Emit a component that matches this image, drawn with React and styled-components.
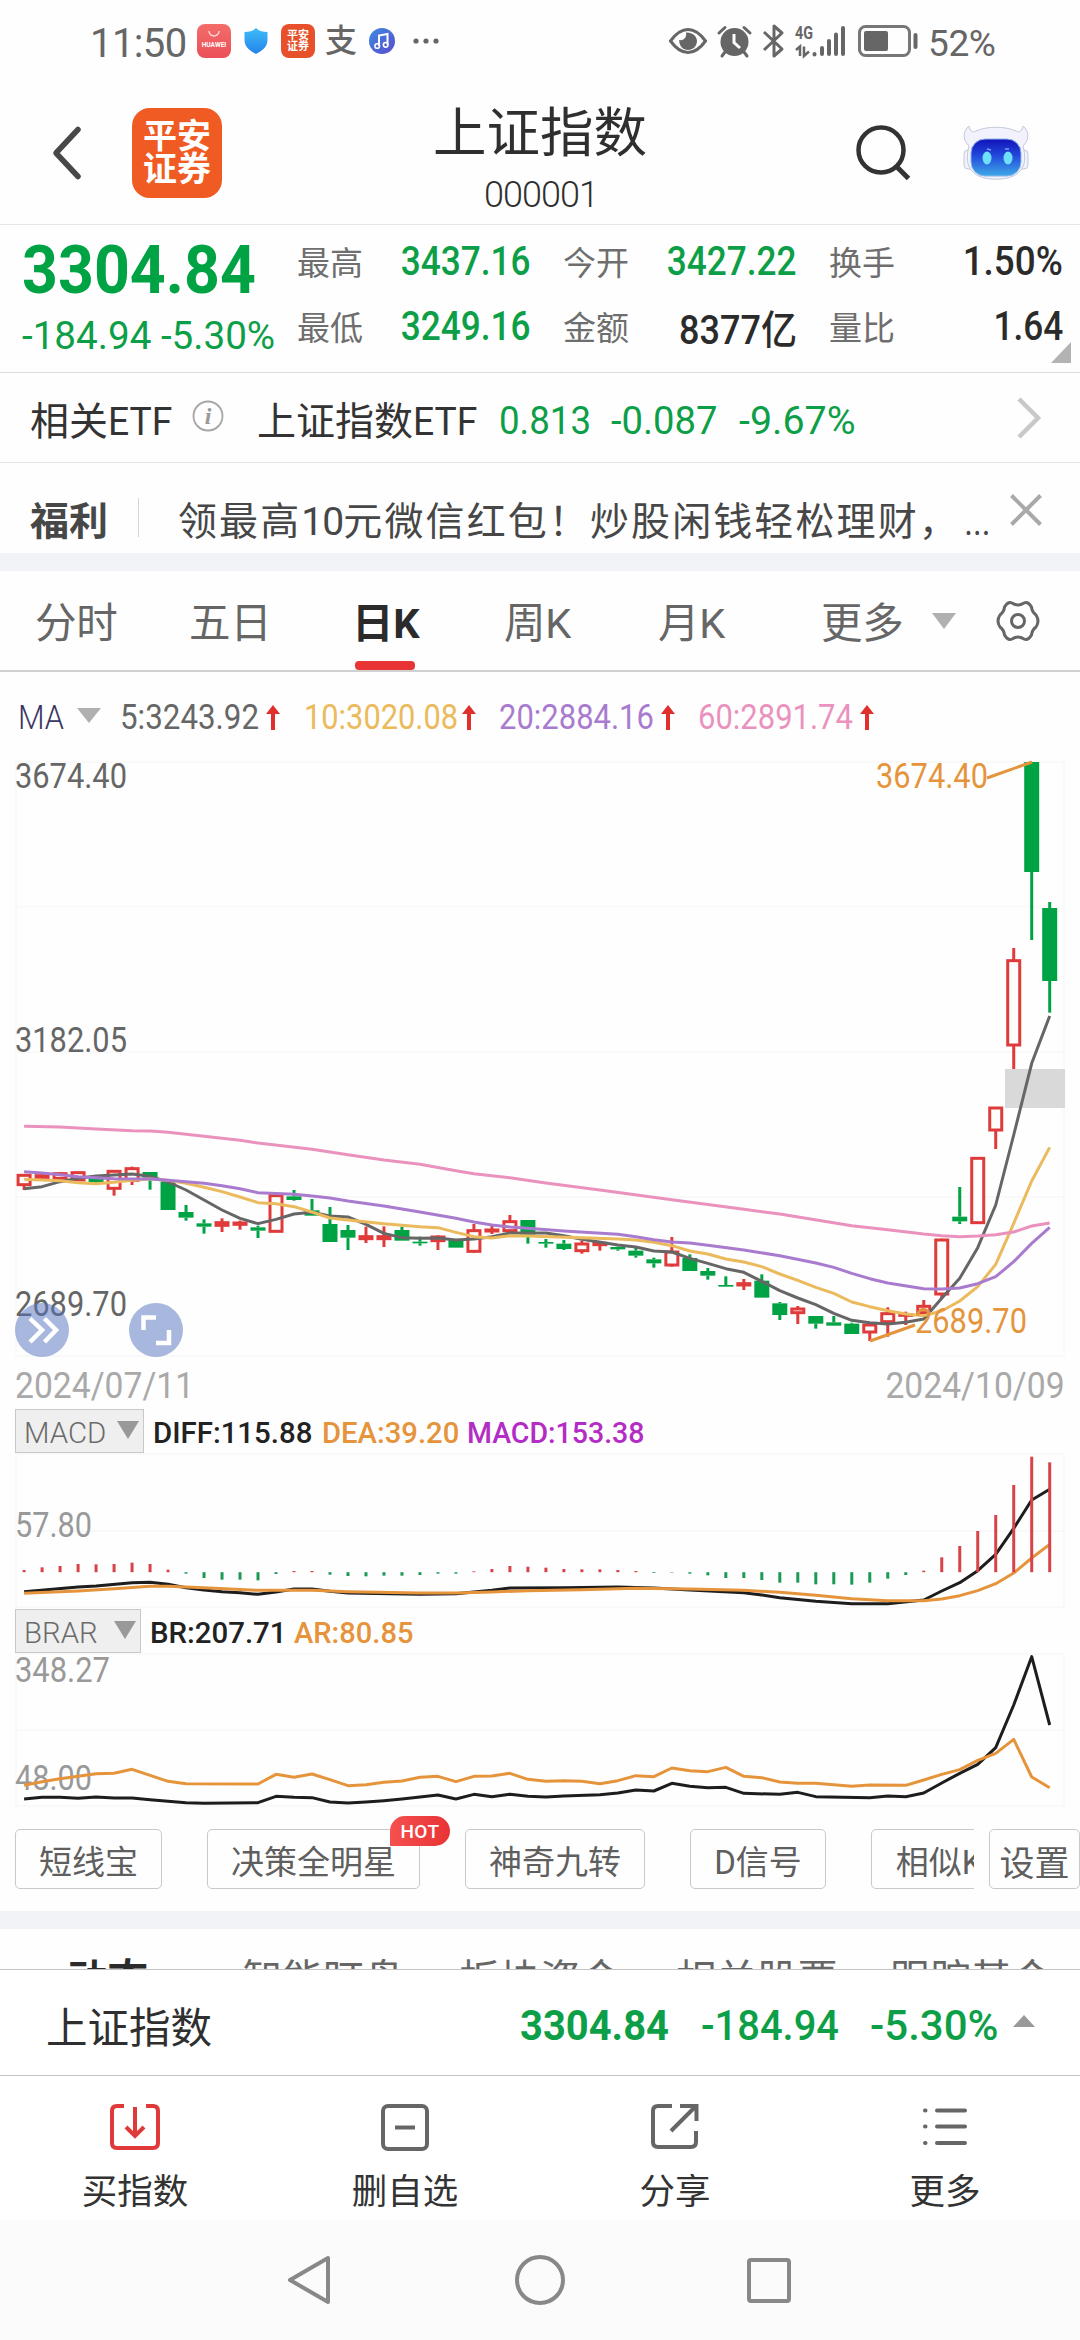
import React from "react";
import styled, { createGlobalStyle } from "styled-components";

const GREEN = "#0d9f48";
const RED = "#df3b3b";
const ORANGE = "#e5943c";

const GlobalStyle = createGlobalStyle`
  * {
    box-sizing: border-box;
  }
  body {
    margin: 0;
    background: #fefefe;
    font-family: Roboto, "Noto Sans CJK SC", sans-serif;
    color: #333;
  }
`;

const Page = styled.div`
  width: 1080px;
  height: 2340px;
  overflow: hidden;
  display: flex;
  flex-direction: column;
  background: #fefefe;

  & > * {
    flex-shrink: 0;
  }
`;

const Svg = styled.svg`
  display: block;
  flex: none;
  overflow: visible;
  margin-left: ${(p) => p.$ml || 0}px;
  margin-top: ${(p) => p.$mt || 0}px;
`;

// 숫자용 좁은 글꼴
const Num = styled.span`
  display: inline-block;
  flex: none;
  white-space: nowrap;
  font-size: ${(p) => p.$size || 39}px;
  font-weight: ${(p) => p.$weight || 400};
  color: ${(p) => p.$color || "inherit"};
  transform: scaleX(${(p) => p.$sx || 0.9});
  transform-origin: ${(p) => p.$origin || "left"} center;
`;

/* ---------- status bar ---------- */
const StatusBar = styled.div`
  height: 80px;
  padding-top: 2px;
  display: flex;
  align-items: center;
  color: #666;
`;
const Time = styled.div`
  width: 107px;
  margin-left: 90px;
  padding-top: 4px;
  font-size: 40px;
  letter-spacing: -0.6px;
`;
const AppIcon = styled.div`
  width: 34px;
  height: 34px;
  margin-right: 8px;
  border-radius: 8px;
  flex: none;
  display: grid;
  place-items: center;
  overflow: hidden;
  background: ${(p) => p.$bg};
`;
const LogoText = styled.div`
  color: #fff;
  font-weight: 700;
  font-size: ${(p) => p.$size}px;
  line-height: ${(p) => p.$line}px;
  white-space: nowrap;
  text-align: center;
`;
const Alipay = styled.div`
  width: 32px;
  margin-left: 2px;
  font-size: 32px;
  line-height: 30px;
  font-weight: 500;
`;
const StatusRight = styled.div`
  width: 411px;
  margin-left: auto;
  display: flex;
  align-items: center;
`;
const Battery = styled.div`
  margin-left: 10px;
  padding-top: 5px;
  font-size: 37px;
  letter-spacing: -0.4px;
`;

/* ---------- header ---------- */
const Header = styled.div`
  height: 145px;
  display: grid;
  grid-template-columns: 1fr auto 1fr;
  align-items: center;
  border-bottom: 1px solid #e6e6e6;
`;
const HeaderSide = styled.div`
  display: flex;
  align-items: center;
  justify-content: ${(p) => (p.$right ? "flex-end" : "flex-start")};
  padding: 2px 51px 0 52px;
`;
const BrandLogo = styled.div`
  width: 90px;
  height: 90px;
  margin-left: 51px;
  border-radius: 18px;
  background: #f05a23;
  display: grid;
  place-items: center;
`;
const TitleBox = styled.div`
  margin-top: 8px;
  text-align: center;
  color: #2f2f2f;
`;
const Title = styled.div`
  height: 76px;
  line-height: 83px;
  font-size: 53.5px;
`;
const Code = styled.div`
  height: 52px;
  line-height: 55px;
  font-size: 36px;
  letter-spacing: -1px;
  text-indent: 2px;
  font-weight: 300;
`;

/* ---------- quote ---------- */
const Quote = styled.div`
  height: 148px;
  display: grid;
  grid-template-columns: 275px 234px 266px 266px;
  padding-left: 22px;
  border-bottom: 1px solid #dedede;
  position: relative;
`;
const PriceBox = styled.div`
  padding-top: 5px;
`;
const Price = styled.div`
  height: 80px;
  line-height: 80px;
  color: #00a344;
`;
const Change = styled.div`
  height: 52px;
  line-height: 52px;
`;
const StatCol = styled.div`
  display: flex;
  flex-direction: column;
  padding: 4px 0 0 ${(p) => p.$pl || 0}px;
`;
const Stat = styled.div`
  height: 65px;
  display: flex;
  align-items: center;
  justify-content: space-between;
  font-size: 33px;
  color: #6e6e6e;
`;
const StatLabel = styled.span`
  margin-top: -2px;
`;
const Corner = styled.div`
  position: absolute;
  right: 9px;
  bottom: 9px;
  width: 0;
  height: 0;
  border-left: 20px solid transparent;
  border-bottom: 21px solid #b3b3b3;
`;

/* ---------- etf / welfare ---------- */
const EtfRow = styled.div`
  height: 90px;
  display: flex;
  align-items: center;
  padding-left: 30px;
  border-bottom: 1px solid #e2e2e2;
  font-size: 39px;
`;
const Slot = styled.div`
  width: ${(p) => p.$w}px;
  margin-left: ${(p) => p.$ml || 0}px;
  padding-top: ${(p) => p.$pt || 0}px;
  flex: none;
  display: flex;
  align-items: baseline;
  white-space: nowrap;
`;
const WelfareRow = styled.div`
  height: 90px;
  display: flex;
  align-items: center;
  padding: 19px 0 0 30px;
  font-size: 39px;
  color: #474747;
`;
const WelfareTag = styled.div`
  width: 108px;
  font-weight: 700;
`;
const WelfareText = styled.div`
  width: 815px;
  margin-left: 39px;
  display: flex;
  align-items: baseline;
  white-space: nowrap;
  letter-spacing: 2.1px;
`;
const Vline = styled.div`
  width: 1px;
  height: 39px;
  background: #d5d5d5;
`;
const Digits = styled.span`
  letter-spacing: -0.9px;
`;
const Dots = styled.span`
  margin-left: auto;
  letter-spacing: 0;
  transform: scaleX(0.85);
`;
const Band = styled.div`
  height: 18px;
  background: #f2f3f6;
`;

/* ---------- period tabs ---------- */
const Tabs = styled.div`
  height: 101px;
  display: grid;
  grid-template-columns: 154px 163px 152px 154px 163px 109px 1fr;
  padding-left: 35px;
  border-bottom: 2px solid #d0d0d0;
`;
const Tab = styled.div`
  height: 99px;
  display: flex;
  align-items: center;
  padding-bottom: 2px;
  font-size: 41.5px;
  letter-spacing: -0.3px;
  color: ${(p) => (p.$active ? "#2b2b2b" : "#666")};
  font-weight: ${(p) => (p.$active ? 700 : 400)};
  position: relative;

  &::after {
    content: "";
    display: ${(p) => (p.$active ? "block" : "none")};
    position: absolute;
    left: 3px;
    bottom: 0;
    width: 60px;
    height: 9px;
    border-radius: 4px;
    background: #e83434;
  }
`;
const TabTools = styled.div`
  display: flex;
  align-items: center;
`;

/* ---------- MA row ---------- */
const MaRow = styled.div`
  height: 78px;
  display: grid;
  grid-template-columns: 102px 184px 195px 199px 1fr;
  align-items: center;
  padding: 12px 0 0 18px;
`;
const MaItem = styled.div`
  width: ${(p) => p.$w}px;
  display: flex;
  align-items: center;
  justify-content: space-between;
  color: ${(p) => p.$color};

  ${Num} {
    width: 0;
  }
`;

/* ---------- charts ---------- */
const DateRow = styled.div`
  height: 44px;
  padding: 0 15px 2px 15px;
  display: flex;
  align-items: center;
  justify-content: space-between;
  color: #a9a9a9;
`;
const IndicatorHead = styled.div`
  height: 44px;
  padding-left: 15px;
  display: flex;
  align-items: center;
`;
const Chip = styled.div`
  width: ${(p) => p.$w}px;
  height: 44px;
  margin-right: 9px;
  padding: 2px 4px 0 8px;
  display: flex;
  justify-content: space-between;
  align-items: center;
  border: 1px solid #c8c8c8;
  background: #efefef;
  color: #6b6b6b;
`;

/* ---------- tools ---------- */
const ToolRow = styled.div`
  height: 101px;
  padding-left: 15px;
  display: flex;
`;
const ToolList = styled.div`
  width: 960px;
  height: 101px;
  margin-right: 15px;
  padding-top: 19px;
  display: flex;
  gap: 45px;
  overflow: hidden;
`;
const ToolButton = styled.div`
  width: ${(p) => p.$w}px;
  height: 60px;
  margin-top: ${(p) => p.$mt || 0}px;
  flex: none;
  display: flex;
  align-items: center;
  justify-content: center;
  padding-top: 2px;
  border: 1px solid #c9c9c9;
  border-radius: 5px;
  font-size: ${(p) => p.$size || 33}px;
  color: #5f5f5f;
  white-space: nowrap;
  position: relative;
`;
const Hot = styled.span`
  position: absolute;
  left: 182px;
  top: -14px;
  width: 60px;
  height: 30px;
  line-height: 31px;
  text-align: center;
  border-radius: 15px 15px 15px 0;
  background: linear-gradient(90deg, #f5504f, #e93335);
  color: #fff;
  font-size: 19px;
  font-weight: 500;
  letter-spacing: 0.5px;
`;

/* ---------- lower ---------- */
const NewsTabs = styled.div`
  height: 40px;
  overflow: hidden;
  display: grid;
  grid-template-columns: 175px 217px 217px 214px 1fr;
  padding-left: 67px;
  line-height: 103px;
  font-size: 40.5px;
  color: #666;
  white-space: nowrap;

  b {
    color: #2b2b2b;
  }
`;
const SummaryBar = styled.div`
  height: 106px;
  padding-left: 46px;
  display: flex;
  align-items: center;
  padding-top: 5px;
  border-top: 1px solid #c4c4c4;
  font-size: 41.5px;
  color: #2f2f2f;
  background: #fff;
`;
const Actions = styled.div`
  height: 145px;
  display: grid;
  grid-template-columns: repeat(4, 270px);
  border-top: 1px solid #c4c4c4;
  background: #fff;
`;
const Action = styled.div`
  display: flex;
  flex-direction: column;
  align-items: center;
  padding-top: 28px;
  font-size: 35.5px;
  line-height: 44px;
  gap: 18px;
`;
const NavBar = styled.div`
  height: 120px;
  display: flex;
  align-items: center;
  background: #fbfbfb;
`;

const stats = [
  [
    ["最高", "3437.16", GREEN, 0.88],
    ["最低", "3249.16", GREEN, 0.88],
  ],
  [
    ["今开", "3427.22", GREEN, 0.88],
    ["金额", "8377亿", "#2b2b2b", 0.9],
  ],
  [
    ["换手", "1.50%", "#2b2b2b", 0.92],
    ["量比", "1.64", "#2b2b2b", 0.88],
  ],
];

// [up, bodyTop, bodyBottom, high, low]
const candles = [
  [1, 286, 314, 286, 330],
  [1, 287, 294, 282, 298],
  [1, 281, 295, 277, 298],
  [1, 278, 300, 275, 302],
  [0, 292, 307, 290, 311],
  [1, 274, 325, 270, 347],
  [1, 266, 301, 260, 315],
  [0, 276, 293, 276, 329],
  [0, 306, 390, 306, 390],
  [0, 396, 413, 375, 422],
  [0, 430, 440, 418, 461],
  [1, 428, 436, 415, 456],
  [1, 429, 433, 422, 449],
  [0, 442, 452, 437, 474],
  [1, 347, 454, 347, 454],
  [0, 349, 360, 330, 362],
  [0, 391, 407, 357, 407],
  [0, 432, 486, 381, 486],
  [0, 450, 473, 435, 510],
  [1, 470, 476, 440, 489],
  [1, 470, 476, 439, 501],
  [0, 450, 482, 440, 482],
  [0, 485, 490, 470, 497],
  [1, 471, 482, 466, 510],
  [0, 478, 503, 478, 503],
  [1, 452, 514, 432, 518],
  [1, 450, 453, 435, 462],
  [1, 425, 452, 405, 452],
  [0, 420, 464, 420, 491],
  [0, 486, 491, 477, 503],
  [0, 491, 507, 480, 510],
  [1, 492, 512, 482, 521],
  [1, 490, 494, 487, 512],
  [0, 501, 508, 500, 512],
  [0, 512, 527, 500, 533],
  [0, 538, 550, 533, 563],
  [1, 516, 555, 471, 560],
  [0, 534, 573, 523, 573],
  [0, 573, 587, 564, 599],
  [0, 615, 620, 589, 620],
  [1, 611, 615, 597, 630],
  [0, 602, 653, 583, 653],
  [0, 670, 705, 666, 720],
  [1, 687, 698, 678, 732],
  [0, 708, 731, 708, 746],
  [0, 727, 737, 708, 737],
  [0, 731, 762, 728, 762],
  [1, 735, 756, 735, 783],
  [1, 701, 725, 682, 770],
  [1, 704, 706, 695, 735],
  [1, 679, 698, 660, 698],
  [1, 480, 642, 476, 656],
  [0, 410, 424, 321, 432],
  [1, 235, 428, 235, 432],
  [1, 84, 150, 84, 207],
  [1, -358, -105, -396, -33],
  [0, -954, -624, -954, -420],
  [0, -516, -297, -534, -202],
];

const ma60 = [[0,139],[2,141],[4,147],[6,152],[7,153],[8,157],[10,169],[12,181],[13,189],[16,208],[18,224],[20,240],[22,253],[24,272],[25,281],[27,293],[29,309],[32,330],[36,359],[40,388],[42,402],[46,437],[48,449],[50,462],[51,467],[52,470],[53,468],[54,464],[55,456],[56,438],[57,429]];
const ma20 = [[0,275],[1,279],[2,284],[3,290],[5,296],[7,297],[8,301],[10,310],[11,317],[12,326],[13,338],[15,343],[16,348],[17,354],[18,363],[20,378],[22,396],[24,415],[25,426],[26,435],[27,441],[28,445],[30,453],[33,463],[34,470],[35,479],[36,486],[37,489],[38,496],[40,510],[42,527],[44,549],[45,562],[46,580],[47,596],[48,609],[50,626],[51,627],[52,624],[53,611],[54,590],[55,545],[56,490],[57,442]];
const ma10 = [[0,298],[2,302],[3,308],[4,311],[5,307],[6,301],[7,297],[8,301],[9,310],[10,322],[11,335],[12,351],[13,368],[14,371],[15,380],[16,396],[17,414],[18,420],[20,431],[22,440],[23,443],[24,457],[25,470],[26,474],[27,467],[28,468],[31,473],[33,477],[34,480],[35,487],[36,497],[37,513],[38,522],[39,537],[40,546],[41,560],[42,582],[43,601],[44,622],[45,640],[46,666],[47,680],[48,692],[49,702],[50,707],[51,693],[52,663],[53,620],[54,553],[55,430],[56,303],[57,202]];
const ma5 = [[0,326],[1,320],[2,305],[3,295],[4,288],[5,285],[6,282],[7,289],[8,306],[9,330],[10,360],[11,390],[12,415],[13,431],[14,418],[15,402],[16,397],[17,408],[18,411],[19,433],[20,460],[21,473],[22,475],[23,474],[24,480],[25,477],[26,470],[27,459],[29,459],[30,467],[31,478],[33,495],[34,501],[35,513],[36,516],[37,535],[38,550],[39,566],[40,577],[41,604],[42,632],[43,654],[44,674],[45,700],[46,721],[47,728],[48,732],[49,727],[50,717],[51,655],[52,595],[53,503],[54,375],[55,165],[56,-50],[57,-192]];

const macdBars = [510,502,498,492,493,492,488,492,509,521,534,539,539,541,522,513,513,524,528,529,527,527,525,521,521,514,507,498,500,503,507,508,508,510,513,519,518,521,526,534,534,540,548,548,553,553,554,548,536,525,512,472,438,393,345,255,170,187];
const diff = [[0,575],[3,561],[4,558],[6,548],[7,547],[8,553],[9,563],[10,570],[11,575],[12,578],[13,583],[14,576],[15,567],[16,567],[17,574],[18,579],[22,583],[24,581],[26,571],[27,564],[30,563],[33,561],[35,564],[37,570],[40,578],[41,585],[42,593],[44,604],[46,611],[48,611],[50,600],[51,573],[52,548],[53,512],[54,463],[55,385],[56,300],[57,268]];
const dea = [[0,580],[3,573],[5,566],[7,559],[8,559],[10,563],[13,571],[16,571],[18,575],[22,579],[24,579],[26,576],[28,572],[31,569],[34,565],[37,567],[40,571],[42,577],[44,586],[46,596],[48,602],[50,602],[51,597],[52,587],[53,572],[54,551],[55,519],[56,474],[57,433]];
const br = [[0,1197],[1,1192],[2,1192],[3,1195],[4,1191],[5,1194],[6,1194],[7,1199],[8,1204],[9,1208],[10,1210],[13,1208],[14,1189],[15,1192],[16,1193],[17,1206],[18,1209],[19,1206],[20,1202],[21,1197],[22,1191],[23,1185],[24,1197],[25,1183],[26,1190],[27,1183],[28,1189],[29,1191],[30,1188],[32,1184],[33,1179],[34,1170],[35,1173],[36,1150],[37,1159],[38,1163],[39,1162],[40,1180],[42,1183],[43,1177],[44,1190],[47,1193],[48,1188],[49,1190],[50,1179],[51,1149],[52,1120],[53,1093],[54,1043],[55,915],[56,770],[57,975]];
const ar = [[0,1156],[1,1145],[2,1136],[3,1129],[4,1121],[5,1120],[6,1108],[7,1126],[8,1144],[9,1151],[13,1152],[14,1123],[15,1132],[16,1122],[17,1139],[18,1157],[19,1154],[20,1147],[21,1143],[22,1132],[23,1129],[24,1145],[25,1129],[26,1128],[27,1120],[28,1138],[29,1144],[30,1142],[31,1144],[32,1151],[33,1142],[34,1127],[35,1130],[36,1104],[37,1112],[38,1115],[39,1102],[40,1129],[41,1133],[42,1146],[43,1150],[44,1150],[46,1159],[47,1155],[49,1156],[50,1140],[51,1123],[52,1109],[53,1081],[54,1060],[55,1018],[56,1131],[57,1163]];

const xAt = (i) => 24.1 + i * 17.993;

function Line({ data, base, color, width = 3 }) {
  return (
    <polyline
      points={data.map(([i, v]) => `${xAt(i)},${base + v / 3}`).join(" ")}
      fill="none"
      stroke={color}
      strokeWidth={width}
      strokeLinejoin="round"
    />
  );
}

function Grid({ rows, color = "#f9f9f9" }) {
  const top = rows[0];
  const bottom = rows[rows.length - 1];
  return (
    <g stroke={color} strokeWidth="2">
      {rows.map((y) => (
        <line key={y} x1="15" x2="1065" y1={y} y2={y} />
      ))}
      <line x1="16" x2="16" y1={top} y2={bottom} />
      <line x1="1064" x2="1064" y1={top} y2={bottom} />
    </g>
  );
}

function AxisText({ x, y, w, color = "#666", children }) {
  return (
    <text
      x={x}
      y={y}
      fontSize="35"
      fill={color}
      textLength={w}
      lengthAdjust="spacingAndGlyphs"
    >
      {children}
    </text>
  );
}

function PriceChart() {
  const y = (v) => 330 + v / 3;
  return (
    <Svg width="1080" height="615" viewBox="0 0 1080 615">
      <Grid rows={[12, 156.5, 302, 447, 606]} />
      <rect x="1005" y="319" width="60" height="39" fill="#d9d9d9" />
      <AxisText x={15} y={38} w={112}>3674.40</AxisText>
      <AxisText x={15} y={302} w={112}>3182.05</AxisText>
      <AxisText x={15} y={566} w={112}>2689.70</AxisText>
      {candles.map(([up, top, bottom, high, low], i) => {
        const x = xAt(i);
        const color = up ? RED : "#00a344";
        return (
          <g key={i} stroke={color} strokeWidth="3">
            <line x1={x} x2={x} y1={y(high)} y2={y(top)} />
            <line x1={x} x2={x} y1={y(bottom)} y2={y(low)} />
            {up ? (
              <rect x={x - 6} y={y(top)} width="12" height={y(bottom) - y(top)} fill="#fefefe" />
            ) : (
              <rect x={x - 7.5} y={y(top)} width="15" height={y(bottom) - y(top)} fill={color} stroke="none" />
            )}
          </g>
        );
      })}
      <Line data={ma5} base={330} color="#666" />
      <Line data={ma10} base={330} color="#ebba5c" />
      <Line data={ma20} base={330} color="#a97bcf" />
      <Line data={ma60} base={330} color="#ea92bd" />
      <g stroke={ORANGE} strokeWidth="3">
        <line x1="987" y1="28" x2="1032" y2="12" />
        <line x1="870" y1="591" x2="915" y2="575" />
      </g>
      <AxisText x={876} y={38} w={112} color={ORANGE}>3674.40</AxisText>
      <AxisText x={915} y={583} w={112} color={ORANGE}>2689.70</AxisText>
      <circle cx="42" cy="580" r="27" fill="rgba(82,112,190,0.5)" />
      <circle cx="156" cy="580" r="27" fill="rgba(82,112,190,0.5)" />
      <g fill="none" stroke="#fff" strokeWidth="4.5">
        <path d="M30 568.5 L42 580 L30 592" />
        <path d="M44.500 568.500 L56 580 L44.500 592" />
        <path d="M156 567.500 H143.500 V580" />
        <path d="M156 593 H169 V580" />
      </g>
    </Svg>
  );
}

function MacdChart() {
  return (
    <Svg width="1080" height="156" viewBox="0 0 1080 156">
      <Grid rows={[1, 78, 154]} />
      <AxisText x={15} y={84} w={77} color="#999">57.80</AxisText>
      <Line data={diff} base={-53} color="#1d1d1d" />
      <Line data={dea} base={-53} color={ORANGE} />
      {macdBars.map((v, i) => {
        const up = v < 516;
        return (
          <line
            key={i}
            x1={xAt(i)}
            x2={xAt(i)}
            y1={119.2}
            y2={-53 + v / 3}
            stroke={up ? "#d8434a" : "#1b9a56"}
            strokeWidth="3"
          />
        );
      })}
    </Svg>
  );
}

function BrarChart() {
  return (
    <Svg width="1080" height="157" viewBox="0 0 1080 157">
      <Grid rows={[1, 77, 153]} />
      <AxisText x={15} y={29} w={95} color="#999">348.27</AxisText>
      <AxisText x={15} y={137} w={77} color="#999">48.00</AxisText>
      <Line data={br} base={-253} color="#1d1d1d" />
      <Line data={ar} base={-253} color={ORANGE} />
    </Svg>
  );
}

function DownTriangle({ w = 24, h = 15, color = "#b0b0b0", ml, mt }) {
  return (
    <Svg width={w} height={h} $ml={ml} $mt={mt}>
      <path d={`M0 0 H${w} L${w / 2} ${h} Z`} fill={color} />
    </Svg>
  );
}

function UpArrow() {
  return (
    <Svg width="14" height="25" viewBox="0 0 14 25">
      <path d="M7 0 L14 9 H9 V25 H5 V9 H0 Z" fill="#e0302c" />
    </Svg>
  );
}

function Status() {
  return (
    <StatusBar>
      <Time>11:50</Time>
      <AppIcon $bg="linear-gradient(#f36d6a, #ea5058)">
        <Svg width="34" height="34" viewBox="0 0 34 34">
          <path d="M12 7 C12 13.500 22 13.500 22 7" fill="none" stroke="#fbd5d3" strokeWidth="1.500" />
          <text x="17" y="22.500" fontSize="6.600" fontWeight="700" fill="#fff" textAnchor="middle">HUAWEI</text>
        </Svg>
      </AppIcon>
      <AppIcon $bg="#fff">
        <Svg width="24" height="26" viewBox="0 0 24 26">
          <defs>
            <linearGradient id="shield" x1="0" y1="0" x2="0" y2="1">
              <stop offset="0" stopColor="#3fbcf8" />
              <stop offset="1" stopColor="#2483ec" />
            </linearGradient>
          </defs>
          <path d="M12 0 C15 3 19 4 23.500 4 V12 C23.500 19 18 23 12 26 C6 23 .5 19 .5 12 V4 C5 4 9 3 12 0Z" fill="url(#shield)" />
        </Svg>
      </AppIcon>
      <AppIcon $bg="#e6502a">
        <LogoText $size={11} $line={11}>
          平安
          <br />
          证券
        </LogoText>
      </AppIcon>
      <Alipay>支</Alipay>
      <Svg width="26" height="26" viewBox="0 0 26 26" $ml={12}>
        <defs>
          <linearGradient id="music" x1="0" y1="0" x2="1" y2="1">
            <stop offset="0" stopColor="#3c8be0" />
            <stop offset="1" stopColor="#5a4ccf" />
          </linearGradient>
        </defs>
        <circle cx="13" cy="13" r="13" fill="url(#music)" />
        <path d="M10 18 V7.500 L18.500 6 V16.500" fill="none" stroke="#fff" strokeWidth="2" />
        <circle cx="8.200" cy="18" r="2.300" fill="none" stroke="#fff" strokeWidth="1.600" />
        <circle cx="16.700" cy="16.800" r="2.300" fill="none" stroke="#fff" strokeWidth="1.600" />
      </Svg>
      <Svg width="26" height="6" $ml={18} viewBox="0 0 26 6" fill="#666">
        <circle cx="3" cy="3" r="2.600" />
        <circle cx="13" cy="3" r="2.600" />
        <circle cx="23" cy="3" r="2.600" />
      </Svg>
      <StatusRight>
        <Svg width="38" height="26" viewBox="0 0 38 26">
          <path d="M1.500 13 C8 4 14 1.500 19 1.500 S30 4 36.500 13 C30 22 24 24.500 19 24.500 S8 22 1.500 13Z" fill="none" stroke="#666" strokeWidth="3" />
          <path d="M17 4.500 C18 9 15 13 10.200 12 C10 18 14 22 19 22 C24 22 28 18 28 13 C28 8 23 4 17 4.500Z" fill="#666" />
        </Svg>
        <Svg width="33" height="31" viewBox="0 0 33 31" $ml={11}>
          <circle cx="16.500" cy="16" r="14" fill="#666" />
          <path d="M1 7 L7 1.500 M32 7 L26 1.500 M7 26 L4 30 M26 26 L29 30" stroke="#666" strokeWidth="3" strokeLinecap="round" />
          <path d="M16 8 V16.500 L22 22" fill="none" stroke="#fff" strokeWidth="3" />
        </Svg>
        <Svg width="21" height="34" viewBox="0 0 21 34" $ml={12}>
          <path d="M1 8 L19 25 L11 32 V2 L19 9 L1 26" fill="none" stroke="#666" strokeWidth="3" strokeLinejoin="round" />
        </Svg>
        <Svg width="50" height="32" viewBox="0 0 50 32" $ml={11}>
          <text x="0" y="14" fontSize="18" fontWeight="700" fill="#666" textLength="18" lengthAdjust="spacingAndGlyphs">4G</text>
          <g stroke="#666" strokeWidth="2.500" fill="none">
            <path d="M1 25 L5 21.500 V31 M9 21.500 V31 L14 26.500" />
          </g>
          <g stroke="#666" strokeWidth="4" strokeLinecap="round">
            <path d="M19.500 29 V29.500 M27 23 V29 M34 16 V29 M41 9.500 V29 M48 3 V29" />
          </g>
        </Svg>
        <Svg width="60" height="32" viewBox="0 0 60 32" $ml={13}>
          <rect x="1.500" y="1.500" width="50" height="29" rx="6" fill="none" stroke="#777" strokeWidth="3" />
          <rect x="6" y="6" width="24" height="20" rx="2" fill="#666" />
          <rect x="55.500" y="8" width="4" height="16" rx="2" fill="#666" />
        </Svg>
        <Battery>52%</Battery>
      </StatusRight>
    </StatusBar>
  );
}

function Robot() {
  return (
    <Svg width="66" height="56" viewBox="0 0 66 56" $ml={53}>
      <defs>
        <linearGradient id="face" x1="0" y1="0" x2="0" y2="1">
          <stop offset="0" stopColor="#1212b8" />
          <stop offset="0.450" stopColor="#2249dc" />
          <stop offset="1" stopColor="#3fa9e6" />
        </linearGradient>
      </defs>
      <g fill="#f1f2fb" stroke="#c3c8dc" strokeWidth="1">
        <rect x="1" y="25" width="10" height="19" rx="4" />
        <rect x="55" y="25" width="10" height="19" rx="4" />
        <path d="M6 1 C7 6 9 8 13 6 C24 1 42 1 53 6 C57 8 59 6 60 1 C66 6 67 14 60 21 C63 32 62 41 57 46 C49 57 17 57 9 46 C4 41 3 32 6 21 C-1 14 0 6 6 1Z" />
      </g>
      <rect x="8" y="14" width="50" height="37" rx="14" fill="url(#face)" stroke="#8fb4ee" strokeWidth="1" />
      <ellipse cx="24" cy="33" rx="4.500" ry="6.500" fill="#6fe0fb" />
      <ellipse cx="45" cy="33" rx="4.500" ry="6.500" fill="#6fe0fb" />
      <path d="M24 24 L28 25 M42 24 L46 24" stroke="#7d9bf5" strokeWidth="1.500" />
    </Svg>
  );
}

const actions = [
  {
    label: "买指数",
    icon: (
      <g stroke="#e0393a">
        <path d="M15 2 H8 Q3 2 3 7 V39 Q3 44 8 44 H44 Q49 44 49 39 V7 Q49 2 44 2 H37" />
        <path d="M26 3 V32 M17 23 L26 32 L35 23" />
      </g>
    ),
  },
  {
    label: "删自选",
    icon: (
      <g stroke="#666">
        <rect x="4" y="2" width="44" height="43" rx="5" />
        <path d="M16 23.500 H36" />
      </g>
    ),
  },
  {
    label: "分享",
    icon: (
      <g stroke="#666">
        <path d="M23 2 H9 Q4 2 4 7 V38 Q4 43 9 43 H42 Q47 43 47 38 V27" />
        <path d="M31 2 H47.500 V17 M46 3 L22 27" />
      </g>
    ),
  },
  {
    label: "更多",
    icon: (
      <g stroke="#666" strokeLinecap="round">
        <path d="M18 6.500 H46 M18 22.500 H46 M18 39 H46 M6 6.500 H6.500 M6 22.500 H6.500 M6 39 H6.500" />
      </g>
    ),
  },
];

export default function App() {
  return (
    <>
      <GlobalStyle />
      <Page>
        <Status />
        <Header>
          <HeaderSide>
            <Svg width="29" height="54" viewBox="0 0 29 54">
              <path d="M26 3.500 L4 27 L26 50.500" fill="none" stroke="#484848" strokeWidth="5.500" strokeLinecap="round" strokeLinejoin="round" />
            </Svg>
            <BrandLogo>
              <LogoText $size={34} $line={33}>
                平安
                <br />
                证券
              </LogoText>
            </BrandLogo>
          </HeaderSide>
          <TitleBox>
            <Title>上证指数</Title>
            <Code>000001</Code>
          </TitleBox>
          <HeaderSide $right>
            <Svg width="54" height="54" viewBox="0 0 54 54">
              <circle cx="25" cy="24" r="22.500" fill="none" stroke="#333" strokeWidth="4.500" />
              <path d="M40 40 L52.500 52.500" stroke="#333" strokeWidth="5" />
            </Svg>
            <Robot />
          </HeaderSide>
        </Header>

        <Quote>
          <PriceBox>
            <Price>
              <Num $size={67} $weight={700} $sx={0.935}>3304.84</Num>
            </Price>
            <Change>
              <Num $size={39} $sx={0.99} $color={GREEN}>-184.94 -5.30%</Num>
            </Change>
          </PriceBox>
          {stats.map((col, i) => (
            <StatCol key={i} $pl={i ? 32 : 0}>
              {col.map(([label, value, color, sx]) => (
                <Stat key={label}>
                  <StatLabel>{label}</StatLabel>
                  <Num $size={40} $weight={500} $sx={sx} $color={color} $origin="right">{value}</Num>
                </Stat>
              ))}
            </StatCol>
          ))}
          <Corner />
        </Quote>

        <EtfRow>
          <Slot $w={162}>
            相关<Num $sx={0.98} $size={38}>ETF</Num>
          </Slot>
          <Svg width="32" height="32" viewBox="0 0 32 32" $mt={-3}>
            <circle cx="16" cy="16" r="14.500" fill="none" stroke="#a5a5a5" strokeWidth="1.800" />
            <text x="16" y="24" fontSize="24" fontStyle="italic" fontWeight="700" fontFamily="Liberation Serif, serif" fill="#999" textAnchor="middle">i</text>
          </Svg>
          <Slot $w={242} $ml={33}>
            上证指数<Num $sx={0.98} $size={38}>ETF</Num>
          </Slot>
          <Slot $w={112} $pt={6}><Num $color={GREEN} $sx={0.94}>0.813</Num></Slot>
          <Slot $w={128} $pt={6}><Num $color={GREEN} $sx={0.98}>-0.087</Num></Slot>
          <Slot $w={278} $pt={6}><Num $color={GREEN} $sx={1.01}>-9.67%</Num></Slot>
          <Svg width="24" height="42" viewBox="0 0 24 42">
            <path d="M2 2 L21 21 L2 40" fill="none" stroke="#c8c8c8" strokeWidth="4.500" />
          </Svg>
        </EtfRow>

        <WelfareRow>
          <WelfareTag>福利</WelfareTag>
          <Vline />
          <WelfareText>
            <span>
              领最高<Digits>10</Digits>元微信红包！炒股闲钱轻松理财，
            </span>
            <Dots>...</Dots>
          </WelfareText>
          <Svg width="32" height="32" viewBox="0 0 32 32" $ml={17} $mt={-16}>
            <path d="M1.500 1.500 L30.500 30.500 M30.500 1.500 L1.500 30.500" stroke="#a9a9a9" strokeWidth="4" />
          </Svg>
        </WelfareRow>
        <Band />

        <Tabs>
          <Tab>分时</Tab>
          <Tab>五日</Tab>
          <Tab $active>日K</Tab>
          <Tab>周K</Tab>
          <Tab>月K</Tab>
          <Tab>更多</Tab>
          <TabTools>
            <DownTriangle w={24} h={16} ml={2} />
            <Svg width="44" height="44" viewBox="0 0 44 44" $ml={40}>
              <path
                d="M40 16 Q44 22 40 28 Q36 31 35.500 36 Q32 42 28 40 Q22 36 16 40 Q12 42 8.500 36 Q8 31 4 28 Q0 22 4 16 Q8 13 8.500 8 Q12 2 16 4 Q22 8 28 4 Q32 2 35.500 8 Q36 13 40 16Z"
                fill="none"
                stroke="#666"
                strokeWidth="3"
                strokeLinejoin="round"
              />
              <circle cx="22" cy="22" r="6.500" fill="none" stroke="#666" strokeWidth="3" />
            </Svg>
          </TabTools>
        </Tabs>

        <MaRow>
          <MaItem $w={83} $color="#3b3663">
            <Num $size={33} $sx={0.93} $weight={300}>MA</Num>
            <DownTriangle mt={-4} />
          </MaItem>
          <MaItem $w={160} $color="#666">
            <Num $size={35} $sx={0.895}>5:3243.92</Num>
            <UpArrow />
          </MaItem>
          <MaItem $w={172} $color="#ebba5c">
            <Num $size={35} $sx={0.88}>10:3020.08</Num>
            <UpArrow />
          </MaItem>
          <MaItem $w={176} $color="#a97bcf">
            <Num $size={35} $sx={0.885}>20:2884.16</Num>
            <UpArrow />
          </MaItem>
          <MaItem $w={176} $color="#ea92bd">
            <Num $size={35} $sx={0.885}>60:2891.74</Num>
            <UpArrow />
          </MaItem>
        </MaRow>

        <PriceChart />
        <DateRow>
          <Num $size={36} $sx={0.935}>2024/07/11</Num>
          <Num $size={36} $sx={0.935} $origin="right">2024/10/09</Num>
        </DateRow>

        <IndicatorHead>
          <Chip $w={129}>
            <Num $size={30} $sx={0.98} $weight={300}>MACD</Num>
            <DownTriangle w={22} h={18} color="#999" ml={-10} mt={-5} />
          </Chip>
          <Slot $w={169} $pt={3}><Num $size={30} $weight={500} $sx={0.98} $color="#222">DIFF:115.88</Num></Slot>
          <Slot $w={145} $pt={3}><Num $size={30} $weight={500} $sx={0.975} $color={ORANGE}>DEA:39.20</Num></Slot>
          <Slot $w={180} $pt={3}><Num $size={30} $weight={500} $sx={0.95} $color="#b32cc4">MACD:153.38</Num></Slot>
        </IndicatorHead>
        <MacdChart />
        <IndicatorHead>
          <Chip $w={126}>
            <Num $size={30} $sx={0.98} $weight={300}>BRAR</Num>
            <DownTriangle w={22} h={18} color="#999" ml={-10} mt={-5} />
          </Chip>
          <Slot $w={144} $pt={2}><Num $size={30} $weight={500} $sx={0.98} $color="#222">BR:207.71</Num></Slot>
          <Slot $w={143} $pt={2}><Num $size={30} $weight={500} $sx={0.97} $color={ORANGE}>AR:80.85</Num></Slot>
        </IndicatorHead>
        <BrarChart />

        <ToolRow>
          <ToolList>
            <ToolButton $w={147}>短线宝</ToolButton>
            <ToolButton $w={213}>
              决策全明星
              <Hot>HOT</Hot>
            </ToolButton>
            <ToolButton $w={180}>神奇九转</ToolButton>
            <ToolButton $w={136}>D信号</ToolButton>
            <ToolButton $w={169}>相似K线</ToolButton>
          </ToolList>
          <ToolButton $w={91} $mt={19} $size={35}>设置</ToolButton>
        </ToolRow>
        <Band />

        <NewsTabs>
          <b>动态</b>
          <span>智能盯盘</span>
          <span>板块资金</span>
          <span>相关股票</span>
          <span>跟踪基金</span>
        </NewsTabs>
        <SummaryBar>
          <Slot $w={474}>上证指数</Slot>
          <Slot $w={181}><Num $size={42} $weight={700} $sx={0.95} $color={GREEN}>3304.84</Num></Slot>
          <Slot $w={169}><Num $size={42} $weight={500} $sx={0.95} $color={GREEN}>-184.94</Num></Slot>
          <Slot $w={143}><Num $size={42} $weight={500} $sx={1} $color={GREEN}>-5.30%</Num></Slot>
          <Svg width="22" height="12" $mt={-8}>
            <path d="M0 12 L11 0 L22 12Z" fill="#999" />
          </Svg>
        </SummaryBar>
        <Actions>
          {actions.map((a) => (
            <Action key={a.label}>
              <Svg width="52" height="48" viewBox="0 0 52 48" fill="none" strokeWidth="4">
                {a.icon}
              </Svg>
              {a.label}
            </Action>
          ))}
        </Actions>
        <NavBar>
          <Svg width="44" height="50" viewBox="0 0 44 50" $ml={287}>
            <path d="M41 3 V47 L3 25Z" fill="none" stroke="#888" strokeWidth="4" strokeLinejoin="round" />
          </Svg>
          <Svg width="50" height="50" viewBox="0 0 50 50" $ml={184}>
            <circle cx="25" cy="25" r="23" fill="none" stroke="#888" strokeWidth="4" />
          </Svg>
          <Svg width="46" height="46" viewBox="0 0 46 46" $ml={181}>
            <rect x="3" y="3" width="40" height="41" rx="2" fill="none" stroke="#888" strokeWidth="4" />
          </Svg>
        </NavBar>
      </Page>
    </>
  );
}
